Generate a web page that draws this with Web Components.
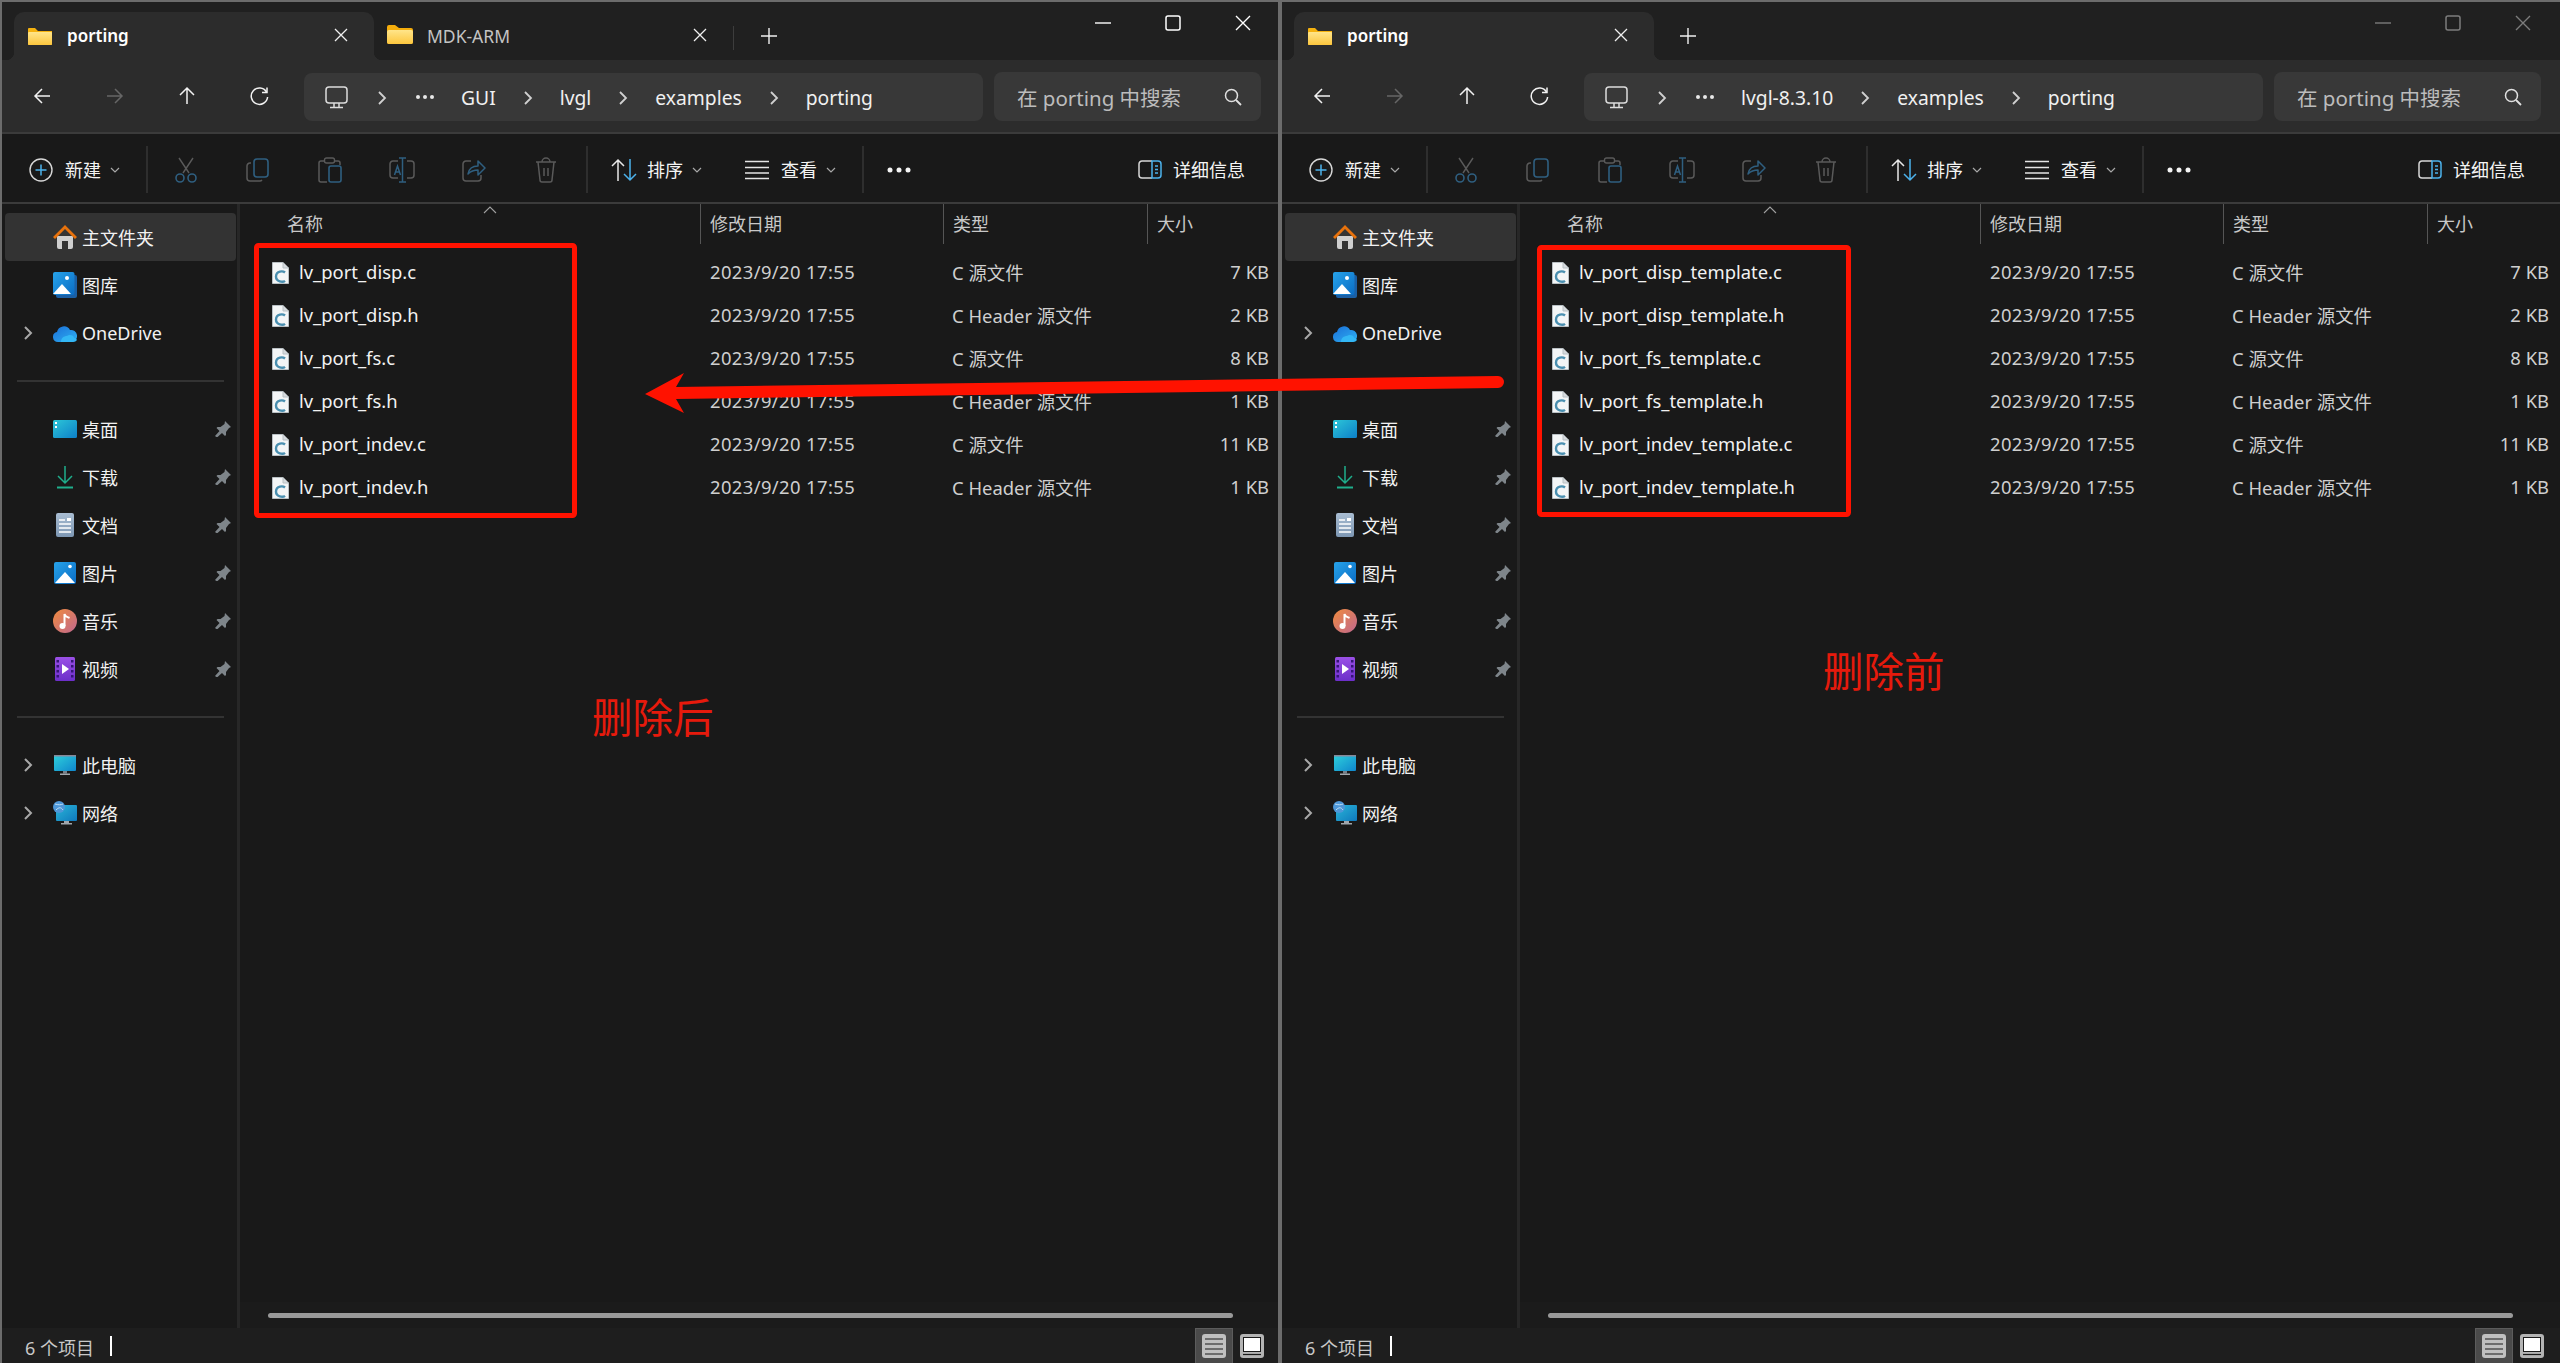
<!DOCTYPE html>
<html lang="zh">
<head>
<meta charset="utf-8">
<title>porting</title>
<style>
  html, body { margin: 0; height: 100%; }
  body {
    width: 2560px; height: 1363px; overflow: hidden; box-sizing: border-box;
    padding: 2px 0 0 2px; background: #6c6c6c;
    display: grid; grid-template-columns: 1276px 1278px; column-gap: 4px;
    font-family: "Noto Sans", "Noto Sans CJK SC", sans-serif; color: #fff;
  }
</style>
</head>
<body>
<explorer-window>
  <title-bar slot="title">
    <win-tab active folder="flat" label="porting"></win-tab>
    <win-tab folder="tall" label="MDK-ARM"></win-tab>
  </title-bar>
  <nav-bar slot="nav" crumbs="GUI,lvgl,examples,porting" folder="porting"></nav-bar>
  <tool-bar slot="tools"></tool-bar>
  <side-nav slot="side"></side-nav>
  <file-list slot="list">
    <file-row name="lv_port_disp.c" kind="C 源文件" size="7 KB"></file-row>
    <file-row name="lv_port_disp.h" kind="C Header 源文件" size="2 KB"></file-row>
    <file-row name="lv_port_fs.c" kind="C 源文件" size="8 KB"></file-row>
    <file-row name="lv_port_fs.h" kind="C Header 源文件" size="1 KB"></file-row>
    <file-row name="lv_port_indev.c" kind="C 源文件" size="11 KB"></file-row>
    <file-row name="lv_port_indev.h" kind="C Header 源文件" size="1 KB"></file-row>
  </file-list>
  <status-bar slot="status"></status-bar>
</explorer-window>

<explorer-window>
  <title-bar slot="title" inactive>
    <win-tab active folder="flat" label="porting"></win-tab>
  </title-bar>
  <nav-bar slot="nav" crumbs="lvgl-8.3.10,examples,porting" folder="porting"></nav-bar>
  <tool-bar slot="tools"></tool-bar>
  <side-nav slot="side"></side-nav>
  <file-list slot="list">
    <file-row name="lv_port_disp_template.c" kind="C 源文件" size="7 KB"></file-row>
    <file-row name="lv_port_disp_template.h" kind="C Header 源文件" size="2 KB"></file-row>
    <file-row name="lv_port_fs_template.c" kind="C 源文件" size="8 KB"></file-row>
    <file-row name="lv_port_fs_template.h" kind="C Header 源文件" size="1 KB"></file-row>
    <file-row name="lv_port_indev_template.c" kind="C 源文件" size="11 KB"></file-row>
    <file-row name="lv_port_indev_template.h" kind="C Header 源文件" size="1 KB"></file-row>
  </file-list>
  <status-bar slot="status"></status-bar>
</explorer-window>

<red-marks></red-marks>

<script>
  const FONT = `"Noto Sans", "Noto Sans CJK SC", sans-serif`;

  const svg = (w, h, body, extra = '') =>
    `<svg width="${w}" height="${h}" viewBox="0 0 ${w} ${h}" fill="none" ${extra}>${body}</svg>`;

  const CHEVRON_DOWN = svg(10, 6, '<path d="M1 1l4 4 4-4" stroke="#a8a8a8" stroke-width="1.2"/>');
  const CHEVRON_RIGHT = svg(10, 16, '<path d="M2 2l6 6-6 6" stroke="#d0d0d0" stroke-width="1.8"/>');
  const BLUE = '#2f5f80';
  const DIM = '#5a5a5a';

  const FOLDERS = {
    flat: svg(24, 18, `<defs><linearGradient id="f" x1="0" y1="0" x2="0" y2="1"><stop offset="0" stop-color="#ffe58a"/><stop offset="1" stop-color="#fcc63e"/></linearGradient></defs>
      <path d="M0 2a1 1 0 0 1 1-1h6l3 3h14v13a1 1 0 0 1-1 1H1a1 1 0 0 1-1-1z" fill="#f5b20f"/><rect y="5" width="24" height="13" rx="1" fill="url(#f)"/>`),
    tall: svg(26, 20, `<defs><linearGradient id="g" x1="0" y1="0" x2="0" y2="1"><stop offset="0" stop-color="#ffe58a"/><stop offset="1" stop-color="#fcc63e"/></linearGradient></defs>
      <path d="M0 3a2 2 0 0 1 2-2h6l4 3h12a2 2 0 0 1 2 2v12a2 2 0 0 1-2 2H2a2 2 0 0 1-2-2z" fill="#f5ad0c"/><rect y="6" width="26" height="14" rx="2" fill="url(#g)"/>`)
  };

  // whole explorer window: bars on top, sidebar and list in the middle, status below
  class ExplorerWindow extends HTMLElement {
    constructor() {
      super();
      this.attachShadow({ mode: 'open' });
      this.shadowRoot.innerHTML = `
        <style>
          :host { display: grid; grid-template-rows: 58px 72px 2px 68px 2px 1124px 35px; grid-template-columns: 235px 3px 1fr; height: 1361px; background: #191919; overflow: hidden; }
          .wide { grid-column: 1 / -1; }
          .line { background: #3b3b3b; }
          .split { background: #272727; }
        </style>
        <div class="wide"><slot name="title"></slot></div>
        <div class="wide"><slot name="nav"></slot></div>
        <div class="wide line"></div>
        <div class="wide"><slot name="tools"></slot></div>
        <div class="wide line"></div>
        <slot name="side"></slot>
        <div class="split"></div>
        <slot name="list"></slot>
        <div class="wide"><slot name="status"></slot></div>
      `;
    }
  }

  class TitleBar extends HTMLElement {
    constructor() {
      super();
      this.attachShadow({ mode: 'open' });
      const dim = this.hasAttribute('inactive');
      const c = dim ? '#7c7c7c' : '#ffffff';
      const many = this.children.length > 1;
      this.shadowRoot.innerHTML = `
        <style>
          :host { display: flex; height: 58px; background: #202020; }
          .tabs { width: 1066px; padding: 10px 0 0 12px; box-sizing: border-box; display: flex; align-items: flex-start; }
          .sep { width: 1px; height: 24px; margin-top: 14px; background: #3d3d3d; }
          .plus { width: 24px; height: 48px; display: flex; align-items: center; justify-content: center; margin-left: ${many ? 23 : 22}px; }
          .ctl { width: 70px; height: 41px; display: flex; align-items: center; justify-content: center; }
        </style>
        <div class="tabs">
          <slot></slot>
          ${many ? '<div class="sep"></div>' : ''}
          <div class="plus">${svg(16, 16, '<path d="M8 0v16M0 8h16" stroke="#f0f0f0" stroke-width="1.4"/>')}</div>
        </div>
        <div class="ctl">${svg(16, 16, `<path d="M0 8h16" stroke="${c}" stroke-width="1.4"/>`)}</div>
        <div class="ctl">${svg(16, 16, `<rect x="1" y="1" width="14" height="14" rx="2" stroke="${c}" stroke-width="1.5"/>`)}</div>
        <div class="ctl">${svg(16, 16, `<path d="M1 1l14 14M15 1L1 15" stroke="${c}" stroke-width="1.4"/>`)}</div>
      `;
    }
  }

  class WinTab extends HTMLElement {
    constructor() {
      super();
      this.attachShadow({ mode: 'open' });
      const active = this.hasAttribute('active');
      this.shadowRoot.innerHTML = `
        <style>
          :host { display: flex; align-items: center; position: relative; box-sizing: border-box; height: 48px; width: ${active ? 360 : 359}px;
            padding-left: ${active ? 14 : 13}px; border-radius: 10px 10px 0 0; font: ${active ? 600 : 400} ${active ? 17 : 17.5}px ${FONT};
            color: ${active ? '#ffffff' : '#c4c4c4'}; background: ${active ? '#2c2c2c' : 'transparent'}; }
          .ico { width: ${active ? 25 : 27}px; display: flex; margin-top: ${active ? -1 : -5}px; }
          .txt { margin-left: ${active ? 14 : 13}px; margin-top: -1px; flex: 1; }
          .x { width: 16px; display: flex; margin-right: 24px; margin-top: -3px; }
          ${active ? `:host::before, :host::after { content: ''; position: absolute; bottom: 0; width: 8px; height: 8px; }
          :host::before { left: -8px; background: radial-gradient(circle at 0 0, #202020 8px, #2c2c2c 8.5px); }
          :host::after { right: -8px; background: radial-gradient(circle at 100% 0, #202020 8px, #2c2c2c 8.5px); }` : ''}
        </style>
        <span class="ico">${FOLDERS[this.getAttribute('folder')]}</span>
        <span class="txt">${this.getAttribute('label')}</span>
        <span class="x">${svg(14, 14, '<path d="M1 1l12 12M13 1L1 13" stroke="#f0f0f0" stroke-width="1.3"/>')}</span>
      `;
    }
  }

  class NavBar extends HTMLElement {
    constructor() {
      super();
      this.attachShadow({ mode: 'open' });
      const crumbs = this.getAttribute('crumbs').split(',');
      const white = '#f2f2f2';
      const arrow = (d, c) => `<div class="btn">${svg(20, 20, `<path d="${d}" stroke="${c}" stroke-width="1.5"/>`)}</div>`;
      const parts = crumbs.map((c, i) => `<span class="crumb">${c}</span>${i < crumbs.length - 1 ? `<span class="chev">${CHEVRON_RIGHT}</span>` : ''}`).join('');
      this.shadowRoot.innerHTML = `
        <style>
          :host { display: flex; height: 72px; background: #2c2c2c; padding-left: 5px; font: 400 19.3px ${FONT}; color: #f0f0f0; }
          .btn { width: 72px; height: 72px; display: flex; align-items: center; justify-content: center; }
          .addr { margin: 13px 0 0 9px; width: 679px; height: 48px; background: #383838; border-radius: 8px; display: flex; align-items: center; padding-left: 21px; box-sizing: border-box; }
          .addr .pc { display: flex; margin-top: 1px; }
          .chev { width: 64px; flex: none; display: flex; justify-content: center; align-items: center; margin-top: 2px; }
          .first { width: 68px; }
          .more { width: 28px; display: flex; align-items: center; }
          .crumb { white-space: nowrap; }
          .search { margin: 12px 0 0 11px; width: 267px; height: 49px; background: #383838; border-radius: 8px; display: flex; align-items: center; padding-left: 23px; box-sizing: border-box; color: #bcbcbc; font-size: 20.5px; }
          .search span { width: 207px; white-space: nowrap; }
        </style>
        ${arrow('M17 10H2M9 3l-7 7 7 7', white)}
        ${arrow('M2 10h15M10 3l7 7-7 7', '#666666')}
        ${arrow('M10 18V2M3 9l7-7 7 7', white)}
        <div class="btn">${svg(20, 20, `<path d="M17.5 6A8.2 8.2 0 1 0 18.6 11" stroke="${white}" stroke-width="1.5"/><path d="M18 1.5V6.5H13" stroke="${white}" stroke-width="1.5"/>`)}</div>
        <div class="addr">
          <span class="pc">${svg(23, 23, '<rect x="1" y="1" width="21" height="16" rx="3" stroke="#dcdcdc" stroke-width="1.5"/><path d="M9 17v4M14 17v4M5 21.6h13" stroke="#dcdcdc" stroke-width="1.5"/>')}</span>
          <span class="chev first">${CHEVRON_RIGHT}</span>
          <span class="more">${svg(18, 4, '<circle cx="2" cy="2" r="2" fill="#e8e8e8"/><circle cx="9" cy="2" r="2" fill="#e8e8e8"/><circle cx="16" cy="2" r="2" fill="#e8e8e8"/>')}</span>
          <span style="width:17px"></span>
          ${parts}
        </div>
        <div class="search">
          <span>在 ${this.getAttribute('folder')} 中搜索</span>
          ${svg(18, 18, '<circle cx="7.5" cy="7.5" r="6" stroke="#e0e0e0" stroke-width="1.5"/><path d="M12 12l5 5" stroke="#e0e0e0" stroke-width="1.8"/>')}
        </div>
      `;
    }
  }

  class ToolBar extends HTMLElement {
    constructor() {
      super();
      this.attachShadow({ mode: 'open' });
      const cell = (body) => `<div class="cell">${body}</div>`;
      this.shadowRoot.innerHTML = `
        <style>
          :host { display: flex; align-items: center; box-sizing: border-box; height: 68px; padding-top: 3px; background: #191919; font: 400 18px ${FONT}; color: #f4f4f4; }
          .cell { width: 72px; display: flex; justify-content: center; }
          .sep { width: 2px; height: 47px; background: #2e2e2e; flex: none; }
          span { display: flex; white-space: nowrap; flex: none; }
          .t2 { width: 36px; margin-top: -1px; }
          .t4 { width: 72px; margin-top: -1px; }
        </style>
        <span style="margin-left:27px">${svg(24, 24, '<circle cx="12" cy="12" r="11" stroke="#d8d8d8" stroke-width="1.4"/><path d="M12 6.5v11M6.5 12h11" stroke="#4cb2ec" stroke-width="1.5"/>')}</span>
        <span class="t2" style="margin-left:12px">新建</span>
        <span style="margin-left:9px">${CHEVRON_DOWN}</span>
        <div class="sep" style="margin-left:26px"></div>
        <div style="width:2px"></div>
        ${cell(svg(24, 26, `<path d="M5 1l10 15M19 1L9 16" stroke="${DIM}" stroke-width="1.4"/><circle cx="6" cy="21" r="4" stroke="${BLUE}" stroke-width="1.6"/><circle cx="18" cy="21" r="4" stroke="${BLUE}" stroke-width="1.6"/>`))}
        ${cell(svg(24, 24, `<path d="M5 5H4a3 3 0 0 0-3 3v12a3 3 0 0 0 3 3h10a3 3 0 0 0 2-1" stroke="${DIM}" stroke-width="1.5"/><rect x="8" y="1" width="14" height="18" rx="3" stroke="${BLUE}" stroke-width="1.6"/>`))}
        ${cell(svg(24, 26, `<path d="M6 4H3a2 2 0 0 0-2 2v17a2 2 0 0 0 2 2h6M17 4h3a2 2 0 0 1 2 2v2" stroke="${DIM}" stroke-width="1.5"/><rect x="6.5" y="1" width="10" height="5" rx="2" stroke="${DIM}" stroke-width="1.4"/><rect x="11" y="9" width="12" height="16" rx="2" stroke="${BLUE}" stroke-width="1.6"/>`))}
        ${cell(svg(26, 26, `<path d="M9 4H4a3 3 0 0 0-3 3v11a3 3 0 0 0 3 3h5M18 4h4a3 3 0 0 1 3 3v11a3 3 0 0 1-3 3h-4" stroke="${DIM}" stroke-width="1.5"/><path d="M13.5 1v24M10 1h7M10 25h7M5.5 18l3-9 3 9M6.6 15h4" stroke="${BLUE}" stroke-width="1.5"/>`))}
        ${cell(svg(24, 26, `<path d="M9 4H4a3 3 0 0 0-3 3v14a3 3 0 0 0 3 3h12a3 3 0 0 0 3-3v-3" stroke="${DIM}" stroke-width="1.5"/><path d="M6 17c1-6 5-8 10-8V4l7 7-7 7v-5c-4 0-7 1-10 4z" stroke="${BLUE}" stroke-width="1.5" stroke-linejoin="round"/>`))}
        ${cell(svg(22, 26, `<path d="M1 5h20M7 5a4 4 0 0 1 8 0M3 5l2 18a2 2 0 0 0 2 2h8a2 2 0 0 0 2-2l2-18M9 11v8M13 11v8" stroke="${DIM}" stroke-width="1.5"/>`))}
        <div class="sep" style="margin-left:4px"></div>
        <span style="margin-left:23px">${svg(26, 26, '<path d="M7 24V3M1 9l6-6 6 6" stroke="#e8e8e8" stroke-width="1.5"/><path d="M19 2v21M13 17l6 6 6-6" stroke="#4cb2ec" stroke-width="1.5"/>')}</span>
        <span class="t2" style="margin-left:10px">排序</span>
        <span style="margin-left:9px">${CHEVRON_DOWN}</span>
        <span style="margin-left:43px">${svg(24, 20, '<path d="M0 1.5h24M0 7.5h24M0 13h24M0 18.5h24" stroke="#e4e4e4" stroke-width="1.6"/>')}</span>
        <span class="t2" style="margin-left:12px">查看</span>
        <span style="margin-left:9px">${CHEVRON_DOWN}</span>
        <div class="sep" style="margin-left:26px"></div>
        <span style="margin-left:23px">${svg(24, 6, '<circle cx="3" cy="3" r="2.5" fill="#f4f4f4"/><circle cx="12" cy="3" r="2.5" fill="#f4f4f4"/><circle cx="21" cy="3" r="2.5" fill="#f4f4f4"/>')}</span>
        <span style="margin-left:227px">${svg(24, 19, '<path d="M14 1H4a3 3 0 0 0-3 3v11a3 3 0 0 0 3 3h10" stroke="#d8d8d8" stroke-width="1.5"/><path d="M14 1h6a3 3 0 0 1 3 3v11a3 3 0 0 1-3 3h-6zM17 6h3M17 9.5h3M17 13h3" stroke="#4cb2ec" stroke-width="1.5"/>')}</span>
        <span class="t4" style="margin-left:11px">详细信息</span>
      `;
    }
  }

  const PIN = svg(16, 16, '<path d="M10 0l6 6-2 1-3 4v3l-1 1-3-3-5 4.5L0 15l4.5-5-3-3 1-1h3l4-3z" fill="#7e858a"/>');
  const CHEV = svg(10, 16, '<path d="M2 2l6 6-6 6" stroke="#a8a8a8" stroke-width="2"/>');

  const NAV_ICONS = {
    home: svg(24, 24, `<path d="M4 11h16v11a2 2 0 0 1-2 2h-3v-8H9v8H6a2 2 0 0 1-2-2z" fill="#cfcfcf"/><path d="M12 0L0 12l2 2L12 4l10 10 2-2z" fill="#e8720c"/>`),
    gallery: svg(24, 26, `<defs><linearGradient id="a" x1="0" y1="0" x2="1" y2="1"><stop offset="0" stop-color="#27a3ea"/><stop offset="1" stop-color="#0a6cc4"/></linearGradient></defs>
      <rect x="3" y="3" width="21" height="23" rx="2" fill="#1a5fa5"/><rect width="21.5" height="23" rx="2" fill="url(#a)"/><path d="M0 22L9 12l9 10z" fill="#fff"/><circle cx="14" cy="6" r="2" fill="#fff"/>`),
    cloud: svg(24, 18, `<defs><linearGradient id="c" x1="0" y1="0" x2="1" y2="1"><stop offset="0" stop-color="#1a6fd8"/><stop offset="1" stop-color="#2fb1f2"/></linearGradient></defs>
      <path d="M5 18a5 5 0 0 1-1-9.9A7 7 0 0 1 17 6a5.5 5.5 0 0 1 2 12z" fill="url(#c)"/><path d="M8 18c0-4 3-6 6-6 2-2 7-1 7 2 2 0 3 2 3 2-1 1-2 2-4 2z" fill="#33b7f5"/>`),
    desktop: svg(24, 19, `<defs><linearGradient id="d" x1="0" y1="0" x2="1" y2="1"><stop offset="0" stop-color="#2cc6d8"/><stop offset="1" stop-color="#0d7fc8"/></linearGradient></defs>
      <rect width="24" height="18" rx="1.5" fill="url(#d)"/><rect x="2" y="2" width="2" height="2" fill="#fff"/><rect x="2" y="6" width="2" height="2" fill="#fff"/>`),
    download: svg(16, 24, '<path d="M8 1v17M1 11l7 7 7-7" stroke="#1fae8c" stroke-width="1.5"/><path d="M0 22.5h16" stroke="#1fae8c" stroke-width="2"/>'),
    docs: svg(18, 24, `<defs><linearGradient id="e" x1="0" y1="0" x2="0" y2="1"><stop offset="0" stop-color="#a9bdd2"/><stop offset="1" stop-color="#7d97b3"/></linearGradient></defs>
      <rect width="18" height="24" rx="2" fill="url(#e)"/><path d="M3 7h6M3 11h12M3 15h12M3 19h12" stroke="#fff" stroke-width="1.3"/><rect x="11" y="5" width="4" height="3" fill="#fff"/>`),
    pics: svg(22, 22, `<defs><linearGradient id="h" x1="0" y1="0" x2="1" y2="1"><stop offset="0" stop-color="#27a3ea"/><stop offset="1" stop-color="#0a6cc4"/></linearGradient></defs>
      <rect width="22" height="22" rx="2" fill="url(#h)"/><path d="M1 21l10-11 10 11z" fill="#fff"/><circle cx="16" cy="4.5" r="1.8" fill="#fff"/>`),
    music: svg(24, 24, `<defs><linearGradient id="i" x1="0" y1="0" x2="1" y2="1"><stop offset="0" stop-color="#f08b3e"/><stop offset="1" stop-color="#c0678f"/></linearGradient></defs>
      <circle cx="12" cy="12" r="12" fill="url(#i)"/><circle cx="9.5" cy="17" r="3" fill="#fff"/><path d="M11.5 17V5c1 3 3 3 5 4" stroke="#fff" stroke-width="2"/>`),
    video: svg(20, 24, `<defs><linearGradient id="j" x1="0" y1="0" x2="0" y2="1"><stop offset="0" stop-color="#9a50e6"/><stop offset="1" stop-color="#6c2fc9"/></linearGradient></defs>
      <rect width="20" height="24" rx="1.5" fill="url(#j)"/><g fill="#351577"><rect x="1.5" y="3" width="2.5" height="2.5"/><rect x="1.5" y="8" width="2.5" height="2.5"/><rect x="1.5" y="13" width="2.5" height="2.5"/><rect x="1.5" y="18" width="2.5" height="2.5"/><rect x="16" y="3" width="2.5" height="2.5"/><rect x="16" y="8" width="2.5" height="2.5"/><rect x="16" y="13" width="2.5" height="2.5"/><rect x="16" y="18" width="2.5" height="2.5"/></g><path d="M7 7l7 5-7 5z" fill="#fff"/>`),
    pc: svg(22, 20, `<defs><linearGradient id="k" x1="0" y1="0" x2="1" y2="1"><stop offset="0" stop-color="#2ed0dc"/><stop offset="1" stop-color="#0f86cc"/></linearGradient></defs>
      <rect width="22" height="16" rx="1" fill="url(#k)"/><rect width="22" height="1.5" fill="#889"/><path d="M9 16h4v2.5H9z" fill="#78808a"/><path d="M6 18.5h10V20H6z" fill="#a0a6ac"/>`),
    net: svg(24, 24, `<defs><linearGradient id="l" x1="0" y1="0" x2="1" y2="1"><stop offset="0" stop-color="#2ab6d8"/><stop offset="1" stop-color="#0f78bc"/></linearGradient></defs>
      <rect x="3" y="4" width="21" height="16" rx="1" fill="url(#l)"/><path d="M11 20h5v2h-5zM8 22h11v1.5H8z" fill="#a0a6ac"/><circle cx="6" cy="6" r="6" fill="#4e97d8"/><path d="M2 3c3 1 6 1 8 0M3 9c3-3 5-3 7 0" stroke="#bcdcf4" stroke-width="1"/>`)
  };

  class NavRow extends HTMLElement {
    constructor() {
      super();
      this.attachShadow({ mode: 'open' });
      const sel = this.hasAttribute('selected');
      this.shadowRoot.innerHTML = `
        <style>
          :host { display: grid; grid-template-columns: 46px 28px 1fr 20px; align-items: center; height: 48px; margin-left: 3px; width: 231px; padding-right: 3px; box-sizing: border-box;
            font: 400 18px ${FONT}; color: #f2f2f2; border-radius: 4px; background: ${sel ? '#333333' : 'transparent'}; }
          div { display: flex; justify-content: center; align-items: center; }
          .txt { justify-content: flex-start; padding-left: 3px; margin-top: -1px; white-space: nowrap; }
        </style>
        <div>${this.hasAttribute('more') ? CHEV : ''}</div>
        <div>${NAV_ICONS[this.getAttribute('icon')]}</div>
        <div class="txt">${this.getAttribute('label')}</div>
        <div>${this.hasAttribute('pin') ? PIN : ''}</div>
      `;
    }
  }

  class SideNav extends HTMLElement {
    constructor() {
      super();
      this.attachShadow({ mode: 'open' });
      this.shadowRoot.innerHTML = `
        <style>
          :host { display: block; padding-top: 9px; background: #191919; }
          hr { border: 0; height: 2px; background: #333333; margin: 23px 13px 23px 15px; }
        </style>
        <nav-row selected icon="home" label="主文件夹"></nav-row>
        <nav-row icon="gallery" label="图库"></nav-row>
        <nav-row more icon="cloud" label="OneDrive"></nav-row>
        <hr>
        <nav-row pin icon="desktop" label="桌面"></nav-row>
        <nav-row pin icon="download" label="下载"></nav-row>
        <nav-row pin icon="docs" label="文档"></nav-row>
        <nav-row pin icon="pics" label="图片"></nav-row>
        <nav-row pin icon="music" label="音乐"></nav-row>
        <nav-row pin icon="video" label="视频"></nav-row>
        <hr>
        <nav-row more icon="pc" label="此电脑"></nav-row>
        <nav-row more icon="net" label="网络"></nav-row>
      `;
    }
  }

  class FileList extends HTMLElement {
    constructor() {
      super();
      this.attachShadow({ mode: 'open' });
      this.shadowRoot.innerHTML = `
        <style>
          :host { --cols: 460px 243px 204px 122px; display: flex; flex-direction: column; position: relative; background: #191919; height: 1124px; font: 400 18px ${FONT}; }
          .head { display: grid; grid-template-columns: var(--cols); height: 47px; color: #c8c8c8; }
          .head div { height: 40px; line-height: 41px; border-left: 1px solid #555555; padding-left: 9px; box-sizing: border-box; }
          .head div:first-child { border: 0; padding-left: 47px; position: relative; }
          .head svg { position: absolute; left: 243px; top: 2px; }
          .rows { flex: 1; }
          .bar { height: 26px; background: #1b1b1b; padding: 11px 0 0 28px; box-sizing: border-box; }
          .bar div { width: 965px; height: 5px; border-radius: 3px; background: #999999; }
        </style>
        <div class="head">
          <div>名称${svg(14, 8, '<path d="M1 7l6-6 6 6" stroke="#a0a0a0" stroke-width="1.1"/>')}</div>
          <div>修改日期</div>
          <div>类型</div>
          <div>大小</div>
        </div>
        <div class="rows"><slot></slot></div>
        <div class="bar"><div></div></div>
      `;
    }
  }

  class FileRow extends HTMLElement {
    constructor() {
      super();
      this.attachShadow({ mode: 'open' });
      this.shadowRoot.innerHTML = `
        <style>
          :host { display: grid; grid-template-columns: var(--cols); align-items: center; height: 43px; font: 400 18.4px ${FONT}; color: #cfcfcf; white-space: nowrap; }
          .name { display: flex; align-items: center; gap: 10px; padding-left: 32px; color: #f2f2f2; }
          .name span { margin-top: -2px; }
          svg { display: block; }
          .date { padding-left: 10px; letter-spacing: 0.4px; margin-top: -2px; }
          .kind { padding-left: 9px; margin-top: -2px; }
          .size { text-align: right; margin-top: -2px; }
        </style>
        <div class="name">${svg(17, 22, '<path d="M0.5 0.5H11L16.5 6V21.5H0.5z" fill="#f3f5f6" stroke="#b9c0c4"/><path d="M11 0.5V6h5.5" fill="#d6dbde" stroke="#b9c0c4"/><path d="M13 10.5C11 8.8 4.300 8.500 4 14.500C4 20 11 20.500 13 18.800" stroke="#4a8fb0" stroke-width="2.4"/>')}<span>${this.getAttribute('name')}</span></div>
        <div class="date">2023/9/20 17:55</div>
        <div class="kind">${this.getAttribute('kind')}</div>
        <div class="size">${this.getAttribute('size')}</div>
      `;
    }
  }

  class StatusBar extends HTMLElement {
    constructor() {
      super();
      this.attachShadow({ mode: 'open' });
      this.shadowRoot.innerHTML = `
        <style>
          :host { display: flex; align-items: center; height: 35px; background: #1e1e1e; font: 400 18px ${FONT}; color: #c8c8c8; }
          .txt { margin-left: 23px; width: 85px; white-space: nowrap; margin-top: 2px; }
          .bar { width: 2px; height: 20px; background: #ffffff; margin-top: 1px; }
          .on { margin-left: 1083px; width: 38px; height: 35px; box-sizing: border-box; background: #4a4a4a; border: 1px solid #5c5c5c; border-bottom: 0; display: flex; align-items: center; justify-content: center; }
          .off { margin-left: 7px; display: flex; }
        </style>
        <span class="txt">6 个项目</span>
        <span class="bar"></span>
        <div class="on">${svg(24, 24, '<rect width="24" height="24" rx="3" fill="#c0c0c0"/><path d="M3 5h18M3 10h18M3 15h18M3 20h18" stroke="#1a1a1a" stroke-width="1.2"/>')}</div>
        <div class="off">${svg(24, 24, '<rect width="24" height="24" rx="3" fill="#b4b4b4"/><rect x="3.5" y="3.5" width="17" height="14" fill="#ffffff" stroke="#1a1a1a"/><path d="M3 20.5h18" stroke="#1a1a1a" stroke-width="1.2"/>')}</div>
      `;
    }
  }

  // hand drawn notes lying over both windows
  class RedMarks extends HTMLElement {
    constructor() {
      super();
      this.attachShadow({ mode: 'open' });
      this.shadowRoot.innerHTML = `
        <style>
          :host { position: absolute; left: 0; top: 0; width: 2560px; height: 1363px; pointer-events: none; }
          svg { position: absolute; left: 0; top: 0; }
          span { position: absolute; font: 400 40.5px/1 "Noto Sans CJK SC", sans-serif; color: #e61a0c; white-space: nowrap; }
        </style>
        <svg width="2560" height="1363" viewBox="0 0 2560 1363" fill="none">
          <rect x="256.5" y="245.5" width="318" height="270" rx="2" stroke="#ff1200" stroke-width="5"/>
          <rect x="1539.5" y="247.5" width="309" height="267" rx="2" stroke="#ff1200" stroke-width="5"/>
          <path d="M645 394L684 373L676 387L1498 376A6 6 0 0 1 1498 388L676 399L684 413z" fill="#ff1200"/>
        </svg>
        <span style="left:592px;top:696px">删除后</span>
        <span style="left:1823px;top:650px">删除前</span>
      `;
    }
  }

  // children first so the shadow roots that hold them find them defined
  customElements.define('win-tab', WinTab);
  customElements.define('nav-row', NavRow);
  customElements.define('file-row', FileRow);
  customElements.define('title-bar', TitleBar);
  customElements.define('nav-bar', NavBar);
  customElements.define('tool-bar', ToolBar);
  customElements.define('side-nav', SideNav);
  customElements.define('file-list', FileList);
  customElements.define('status-bar', StatusBar);
  customElements.define('red-marks', RedMarks);
  customElements.define('explorer-window', ExplorerWindow);
</script>
</body>
</html>
